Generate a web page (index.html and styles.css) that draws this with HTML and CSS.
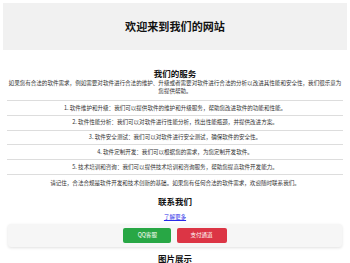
FILE: index.html
```html
<!DOCTYPE html>
<html lang="zh-CN">
<head>
  <meta charset="UTF-8">
  <meta name="viewport" content="width=device-width, initial-scale=1.0">
  <title>欢迎来到我们的网站</title>
  <link rel="stylesheet" href="styles.css">
</head>
<body>
  <!-- 顶部标题 -->
  <header class="site-header">
    <h1>欢迎来到我们的网站</h1>
  </header>

  <!-- 服务介绍 -->
  <section class="services">
    <h2>我们的服务</h2>
    <p class="intro">如果您有合法的软件需求，例如需要对软件进行合法的维护、升级或者需要对软件进行合法的分析以改进其性能和安全性，我们很乐意为您提供帮助。</p>
    <ul class="service-list">
      <li>1. 软件维护和升级：我们可以提供软件的维护和升级服务，帮助您改进软件的功能和性能。</li>
      <li>2. 软件性能分析：我们可以对软件进行性能分析，找出性能瓶颈，并提供改进方案。</li>
      <li>3. 软件安全测试：我们可以对软件进行安全测试，确保软件的安全性。</li>
      <li>4. 软件定制开发：我们可以根据您的需求，为您定制开发软件。</li>
      <li>5. 技术培训和咨询：我们可以提供技术培训和咨询服务，帮助您提高软件开发能力。</li>
    </ul>
    <p class="note">请记住，合法合规是软件开发和技术创新的基础。如果您有任何合法的软件需求，欢迎随时联系我们。</p>
  </section>

  <!-- 联系方式 -->
  <section class="contact">
    <h2>联系我们</h2>
    <a class="more-link" href="#">了解更多</a>
    <div class="btn-bar">
      <a class="btn btn-qq" href="#">QQ客服</a>
      <a class="btn btn-pay" href="#">支付通道</a>
    </div>
  </section>

  <!-- 图片 -->
  <section class="gallery">
    <h2>图片展示</h2>
  </section>
</body>
</html>
```

FILE: styles.css
```css
body {
  margin: 2.9px;
  font-family: "Noto Sans CJK SC", "Noto Sans", sans-serif;
  font-size: 5.55px;
  line-height: 8.5px;
  color: #333;
  background: #fff;
}

.site-header {
  background-color: #f1f1f1;
  height: 47px;
  text-align: center;
}

.site-header h1 {
  margin: 0;
  font-size: 11.1px;
  line-height: 47px;
  color: #111;
}

h2 {
  margin: 0;
  font-size: 8.5px;
  line-height: 10px;
  color: #111;
  text-align: center;
}

.services {
  padding: 0 4.5px;
  text-align: center;
}

.services h2 {
  margin-top: 18.5px;
}

.services p {
  margin: 0;
}

.services .intro {
  margin-top: 0.5px;
}

.service-list {
  list-style: none;
  margin: 4px 0 0;
  padding: 0;
  border-top: 1px solid #ddd;
}

.service-list li {
  padding: 2.7px 0;
  line-height: 8.46px;
  border-bottom: 1px solid #ddd;
}

.services .note {
  margin-top: 3.5px;
}

.contact {
  padding: 0 5px;
  text-align: center;
}

.contact h2 {
  margin-top: 8.5px;
}

.more-link {
  display: block;
  width: max-content;
  margin: 7.7px auto 0;
  color: #2a2ae8;
}

.btn-bar {
  margin-top: 2.5px;
  padding: 3.6px 0;
  background-color: #f6f6f6;
  border-radius: 3px;
  box-shadow: 0 1px 3px rgba(0, 0, 0, 0.12);
  display: flex;
  justify-content: center;
  gap: 5.4px;
}

.btn {
  display: block;
  padding: 3.5px 0;
  line-height: 8.5px;
  color: #fff;
  text-decoration: none;
  border-radius: 2px;
  text-align: center;
}

.btn-qq {
  width: 47.7px;
  background-color: #28a745;
}

.btn-pay {
  width: 50px;
  background-color: #dc3545;
}

.gallery h2 {
  margin-top: 6.5px;
}
```
